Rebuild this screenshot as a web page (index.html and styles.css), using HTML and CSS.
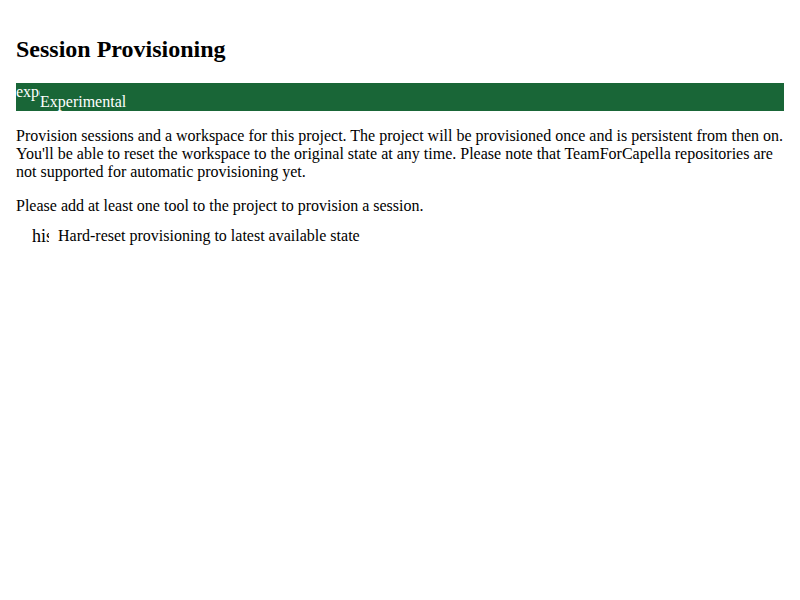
FILE: index.html
```html
<!DOCTYPE html>
<html>
<head>
<meta charset="utf-8">
<link rel="stylesheet" href="styles.css">
</head>
<body>
<div class="page">
  <h2 class="title">Session Provisioning</h2>
  <div class="banner"><span class="icon">experiment</span>Experimental</div>
  <p class="text">Provision sessions and a workspace for this project. The project will be provisioned once and is persistent from then on. You'll be able to reset the workspace to the original state at any time. Please note that TeamForCapella repositories are not supported for automatic provisioning yet.</p>
  <p class="text last">Please add at least one tool to the project to provision a session.</p>
  <div class="reset">
    <span class="icon-flex">history</span>
    <span class="reset-label">Hard-reset provisioning to latest available state</span>
  </div>
</div>
</body>
</html>
```
FILE: styles.css
```css
body {
  margin: 8px;
  font-family: "Liberation Serif", serif;
  font-size: 16px;
  color: #000;
  background: #fff;
}
.page {
  padding: 8px;
}
.title {
  font-size: 24px;
  font-weight: bold;
  margin: 19.92px 0;
}
.banner {
  background: #196637;
  color: #fff;
}
.icon {
  display: inline-block;
  width: 24px;
  height: 24px;
  overflow: hidden;
  white-space: nowrap;
}
.text {
  margin: 16px 0;
}
.text.last {
  margin-bottom: 12px;
}
.reset {
  display: flex;
  align-items: center;
  padding-left: 16px;
  height: 18px;
}
.icon-flex {
  width: 17px;
  height: 20px;
  line-height: 20px;
  font-size: 18px;
  overflow: hidden;
  white-space: nowrap;
  flex: none;
}
.reset-label {
  margin-left: 9px;
  line-height: 18px;
}
```
